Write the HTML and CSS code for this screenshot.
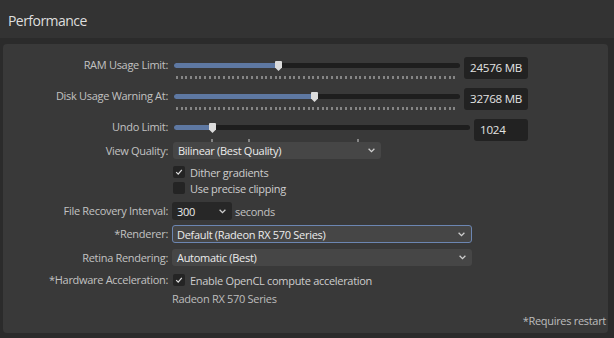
FILE: index.html
```html
<!DOCTYPE html>
<html lang="en">
<head>
    <meta charset="UTF-8">
    <title>Performance</title>
    <link rel="stylesheet" href="styles.css">
</head>
<body>
    <header class="title-bar">Performance</header>

    <main class="panel">
        <div class="row slider-row">
            <span class="lbl">RAM Usage Limit:</span>
            <div class="slider">
                <div class="track">
                    <div class="fill" style="width:36.5%"></div>
                    <svg class="thumb" style="left:36.5%" width="7" height="10" viewBox="0 0 7 10"><path d="M1 0H6Q7 0 7 1V6.5L3.5 10L0 6.5V1Q0 0 1 0Z" fill="#dcdcdc"/></svg>
                </div>
                <div class="ticks"></div>
            </div>
            <div class="value">24576 MB</div>
        </div>

        <div class="row slider-row">
            <span class="lbl">Disk Usage Warning At:</span>
            <div class="slider">
                <div class="track">
                    <div class="fill" style="width:49.3%"></div>
                    <svg class="thumb" style="left:49.3%" width="7" height="10" viewBox="0 0 7 10"><path d="M1 0H6Q7 0 7 1V6.5L3.5 10L0 6.5V1Q0 0 1 0Z" fill="#dcdcdc"/></svg>
                </div>
                <div class="ticks"></div>
            </div>
            <div class="value">32768 MB</div>
        </div>

        <div class="row slider-row short">
            <span class="lbl">Undo Limit:</span>
            <div class="slider">
                <div class="track">
                    <div class="fill" style="width:13%"></div>
                    <svg class="thumb" style="left:13%" width="7" height="10" viewBox="0 0 7 10"><path d="M1 0H6Q7 0 7 1V6.5L3.5 10L0 6.5V1Q0 0 1 0Z" fill="#dcdcdc"/></svg>
                </div>
                <div class="ticks sparse">
                    <i style="left:13%"></i>
                    <i style="left:25.4%"></i>
                    <i style="left:62%"></i>
                </div>
            </div>
            <div class="value narrow">1024</div>
        </div>

        <div class="row view-row">
            <span class="lbl">View Quality:</span>
            <div class="select view-select">
                <span>Bilinear (Best Quality)</span>
                <svg class="chev" width="7" height="5" viewBox="0 0 7 5"><polyline points="0.6,0.8 3.5,3.6 6.4,0.8" fill="none" stroke="#d0d0d0" stroke-width="1.3"/></svg>
            </div>
        </div>

        <div class="row check-row first">
            <span class="lbl"></span>
            <span class="box checked"><svg width="12" height="12" viewBox="0 0 12 12"><polyline points="3.2,6.2 5.2,8.2 8.8,3.8" fill="none" stroke="#dedede" stroke-width="1.2"/></svg></span>
            <span class="check-text">Dither gradients</span>
        </div>

        <div class="row check-row">
            <span class="lbl"></span>
            <span class="box"></span>
            <span class="check-text">Use precise clipping</span>
        </div>

        <div class="row recovery-row">
            <span class="lbl">File Recovery Interval:</span>
            <div class="select dark">
                <span>300</span>
                <svg class="chev" width="7" height="5" viewBox="0 0 7 5"><polyline points="0.6,0.8 3.5,3.6 6.4,0.8" fill="none" stroke="#d0d0d0" stroke-width="1.3"/></svg>
            </div>
            <span class="unit">seconds</span>
        </div>

        <div class="row renderer-row">
            <span class="lbl">*Renderer:</span>
            <div class="select wide focused">
                <span>Default (Radeon RX 570 Series)</span>
                <svg class="chev" width="7" height="5" viewBox="0 0 7 5"><polyline points="0.6,0.8 3.5,3.6 6.4,0.8" fill="none" stroke="#d0d0d0" stroke-width="1.3"/></svg>
            </div>
        </div>

        <div class="row retina-row">
            <span class="lbl">Retina Rendering:</span>
            <div class="select wide">
                <span>Automatic (Best)</span>
                <svg class="chev" width="7" height="5" viewBox="0 0 7 5"><polyline points="0.6,0.8 3.5,3.6 6.4,0.8" fill="none" stroke="#d0d0d0" stroke-width="1.3"/></svg>
            </div>
        </div>

        <div class="row check-row hw-row">
            <span class="lbl">*Hardware Acceleration:</span>
            <span class="box checked"><svg width="12" height="12" viewBox="0 0 12 12"><polyline points="3.2,6.2 5.2,8.2 8.8,3.8" fill="none" stroke="#dedede" stroke-width="1.2"/></svg></span>
            <span class="check-text">Enable OpenCL compute acceleration</span>
        </div>

        <div class="row device-row">
            <span class="lbl"></span>
            <span class="device">Radeon RX 570 Series</span>
        </div>

        <div class="note">*Requires restart</div>
    </main>
</body>
</html>
```

FILE: styles.css
```css
body {
    margin: 0;
    width: 614px;
    height: 338px;
    overflow: hidden;
    background: #2b2b2b;
    font-family: "Open Sans", sans-serif;
    font-size: 11px;
    letter-spacing: -0.3px;
    color: #c2c2c2;
}
.title-bar {
    height: 38px;
    box-sizing: border-box;
    padding: 2px 0 0 8px;
    display: flex;
    align-items: center;
    background: #333333;
    color: #dedede;
    font-size: 14px;
    letter-spacing: -0.55px;
}
.panel {
    margin: 6px 6px 0 3px;
    height: 289px;
    box-sizing: border-box;
    padding-top: 13px;
    background: #393939;
    border-radius: 4px;
}
.row {
    display: flex;
    align-items: center;
}
.lbl {
    flex: none;
    width: 165px;
    margin-right: 4px;
    text-align: right;
    line-height: 16px;
    white-space: nowrap;
}

/* sliders */
.slider-row {
    align-items: flex-start;
    height: 31px;
}
.slider-row.short {
    height: 22px;
}
.slider {
    flex: 1;
    padding: 6px 0 0 2px;
}
.track {
    position: relative;
    height: 5px;
    background: #1e1e1e;
    border-radius: 3px;
}
.fill {
    height: 100%;
    background: #5e78a2;
    border-radius: 3px;
}
.thumb {
    position: absolute;
    top: -2px;
    margin-left: -3.5px;
}
.ticks {
    height: 3px;
    margin: 8px 2px 0 2px;
    background: repeating-linear-gradient(90deg, #858585 0 2px, transparent 2px 4.7px);
}
.ticks.sparse {
    position: relative;
    margin: 9px 0 0 0;
    background: none;
}
.ticks.sparse i {
    position: absolute;
    top: 0;
    width: 2px;
    height: 3px;
    margin-left: -1px;
    background: #858585;
}
.value {
    flex: none;
    width: 64px;
    height: 22px;
    margin: 0 80px 0 4px;
    padding-left: 6px;
    box-sizing: border-box;
    background: #222222;
    border-radius: 3px;
    color: #e2e2e2;
    font-size: 11.6px;
    letter-spacing: -0.25px;
    line-height: 22px;
}
.value.narrow {
    width: 54px;
}

/* dropdowns */
.select {
    display: flex;
    align-items: center;
    justify-content: space-between;
    box-sizing: border-box;
    padding: 0 6px 0 5px;
    background: #464646;
    border-radius: 3px;
    color: #ececec;
    white-space: nowrap;
}
.view-row {
    margin-top: 1px;
}
.view-select {
    width: 208px;
    height: 17px;
    margin-left: 1px;
}
.select.dark {
    width: 60px;
    height: 18px;
    background: #272727;
}
.select.wide {
    width: 300px;
    height: 17px;
}
.select.focused {
    height: 18px;
    border: 1px solid #6c86b2;
    padding-left: 4px;
}
.chev {
    flex: none;
}
.unit {
    margin-left: 3px;
}
.recovery-row {
    margin-top: 6px;
}
.renderer-row {
    margin-top: 5px;
}
.retina-row {
    margin-top: 6px;
}

/* checkboxes */
.check-row {
    height: 16px;
}
.check-row.first {
    margin-top: 5px;
}
.hw-row {
    margin-top: 6px;
}
.box {
    flex: none;
    width: 12px;
    height: 12px;
    margin: 0 5px 0 1px;
    background: #242424;
    border-radius: 2px;
}
.box svg {
    display: block;
}
.check-text {
    color: #cdcdcd;
}
.device-row {
    height: 16px;
    margin-top: 2px;
}
.device {
    color: #bdbdbd;
}
.note {
    margin-top: 7px;
    padding-right: 2px;
    text-align: right;
    line-height: 16px;
    color: #bdbdbd;
}
```
